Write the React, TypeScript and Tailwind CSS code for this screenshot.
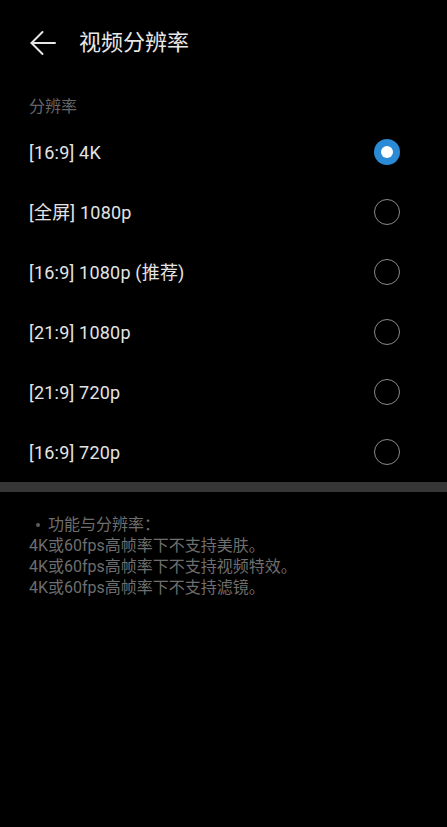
import React from "react";

const options = [
  "[16:9] 4K",
  "[全屏] 1080p",
  "[16:9] 1080p (推荐)",
  "[21:9] 1080p",
  "[21:9] 720p",
  "[16:9] 720p",
];

export default function App() {
  const font = { fontFamily: 'Roboto, "Noto Sans CJK SC", sans-serif' };
  return (
    <div className="w-[447px] h-[827px] bg-black overflow-hidden" style={font}>
      <div className="flex items-center h-[86px] pl-[30px]">
        <svg width="26" height="26" viewBox="0 0 26 26" fill="none" stroke="#e6e6e6" strokeWidth="2" strokeLinecap="round" strokeLinejoin="round">
          <path d="M1.5 13H25" />
          <path d="M12.5 2L1.5 13L12.5 24" />
        </svg>
        <span className="ml-[23px] text-[22px] text-[#e8e8e8] leading-none">视频分辨率</span>
      </div>
      <div className="pl-[29px] pt-[6px] h-[36px] text-[16px] text-[#666666] leading-none flex items-center">分辨率</div>
      <div className="flex flex-col">
        {options.map((o, i) => (
          <div key={o} className="flex items-center justify-between h-[60px] pl-[29px] pr-[47px]">
            <span className="text-[18px] text-[#e4e4e4] tracking-[0.2px]">{o}</span>
            {i === 0 ? (
              <div className="w-[26px] h-[26px] rounded-full bg-[#2b8ad6] flex items-center justify-center">
                <div className="w-[12px] h-[12px] rounded-full bg-white" />
              </div>
            ) : (
              <div className="w-[26px] h-[26px] rounded-full border-[1.5px] border-[#8a8a8a]" />
            )}
          </div>
        ))}
      </div>
      <div className="h-[10px] bg-[#363636]" />
      <div className="pt-[22px] pl-[29px] text-[16px] leading-[21px] text-[#6e6e6e]">
        <div className="flex items-center">
          <span className="ml-[7px] mr-[8px] w-[4px] h-[4px] rounded-full bg-[#5e5e5e]" />
          <span>功能与分辨率：</span>
        </div>
        <div>4K或60fps高帧率下不支持美肤。</div>
        <div>4K或60fps高帧率下不支持视频特效。</div>
        <div>4K或60fps高帧率下不支持滤镜。</div>
      </div>
    </div>
  );
}
